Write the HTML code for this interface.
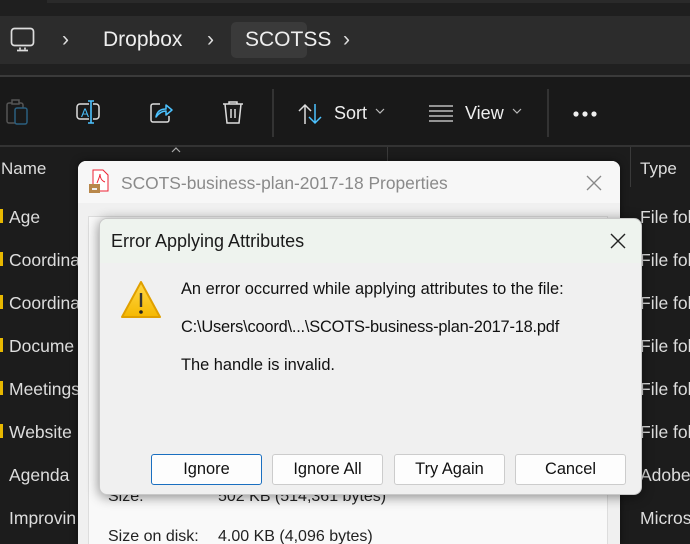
<!DOCTYPE html>
<html style="overflow:hidden"><head><meta charset="utf-8"><style>
*{margin:0;padding:0;box-sizing:border-box}
html,body{width:690px;height:544px;overflow:hidden}
body{background:#1c1c1c;font-family:"Liberation Sans",sans-serif;position:relative;color:#fff}
.a{position:absolute}
.t{white-space:nowrap}
</style></head><body>
<div class="a" style="left:0;top:0;width:690px;height:16px;background:#1f1f1f"></div>
<div class="a" style="left:47px;top:0;width:643px;height:3px;background:#2a2a2a"></div>
<div class="a" style="left:0;top:16px;width:690px;height:48px;background:#2c2c2c"></div>
<div class="a" style="left:0;top:64px;width:690px;height:11px;background:#202020"></div>
<div class="a" style="left:0;top:75px;width:690px;height:2px;background:#3a3a3a"></div>
<div class="a" style="left:0;top:77px;width:690px;height:68px;background:#191919"></div>
<div class="a" style="left:0;top:145px;width:690px;height:2px;background:#333"></div>
<!-- address bar -->
<svg class="a" style="left:10px;top:27px" width="28" height="26" viewBox="0 0 28 26"><rect x="1.5" y="1.5" width="22" height="17" rx="3" fill="none" stroke="#ddd" stroke-width="1.7"/><path d="M10 20.5v2M15 20.5v2M7 23.5h11" stroke="#ddd" stroke-width="1.7"/></svg>
<div class="a t" style="left:62px;top:28px;font-size:21px;color:#ddd">›</div>
<div class="a t" style="left:103px;top:28px;font-size:21px;color:#eee">Dropbox</div>
<div class="a t" style="left:207px;top:28px;font-size:21px;color:#ddd">›</div>
<div class="a" style="top:22px;width:76px;height:36px;background:#3a3a3a;border-radius:5px;left:231px"></div>
<div class="a t" style="left:245px;top:28px;font-size:21px;color:#eee">SCOTSS</div>
<div class="a t" style="left:343px;top:28px;font-size:21px;color:#ddd">›</div>
<!-- toolbar -->
<svg class="a" style="left:4px;top:98px" width="26" height="30"><rect x="3" y="5" width="16" height="20" rx="2" fill="none" stroke="#555" stroke-width="1.5"/><rect x="8" y="2" width="7" height="4" fill="#191919" stroke="#555" stroke-width="1.5"/><rect x="11" y="10" width="12" height="16" rx="2" fill="#191919" stroke="#2a5f7f" stroke-width="1.5"/></svg>
<svg class="a" style="left:75px;top:99px" width="28" height="28"><rect x="2" y="5" width="22" height="15" rx="3" fill="none" stroke="#ddd" stroke-width="1.5"/><rect x="14" y="3" width="4" height="20" fill="#191919"/><path d="M16 2v22M13 2h6M13 24h6" stroke="#4cc2ff" stroke-width="1.6"/><text x="6" y="18" font-size="12" fill="#4cc2ff" font-family="Liberation Sans">A</text></svg>
<svg class="a" style="left:148px;top:99px" width="28" height="28"><path d="M12 5H5a2 2 0 0 0-2 2v14a2 2 0 0 0 2 2h14a2 2 0 0 0 2-2v-4" fill="none" stroke="#ddd" stroke-width="1.5"/><path d="M8 18c1-6 5-8 10-8V6l6 5-6 5v-4c-4 0-7 2-10 6z" fill="none" stroke="#4cc2ff" stroke-width="1.5" stroke-linejoin="round"/></svg>
<svg class="a" style="left:220px;top:99px" width="26" height="28"><path d="M3 5h20M9 5V3h8v2M5 5l2 19h12l2-19M11 10v9M15 10v9" fill="none" stroke="#ddd" stroke-width="1.5"/></svg>
<div class="a" style="left:272px;top:89px;width:2px;height:48px;background:#333"></div>
<svg class="a" style="left:297px;top:102px" width="28" height="24"><path d="M8 22V3M2 9l6-6 6 6" fill="none" stroke="#ddd" stroke-width="1.5"/><path d="M18 2v19M12 15l6 6 6-6" fill="none" stroke="#4cc2ff" stroke-width="1.5"/></svg>
<div class="a t" style="left:334px;top:103px;font-size:18px;color:#eee">Sort</div>
<svg class="a" style="left:375px;top:108px" width="10" height="6"><path d="M1 1l4 4 4-4" fill="none" stroke="#bbb" stroke-width="1.2"/></svg>
<svg class="a" style="left:428px;top:104px" width="26" height="18"><path d="M1 2h24M1 7h24M1 12h24M1 17h24" stroke="#ddd" stroke-width="1.3"/></svg>
<div class="a t" style="left:465px;top:103px;font-size:18px;color:#eee">View</div>
<svg class="a" style="left:512px;top:108px" width="10" height="6"><path d="M1 1l4 4 4-4" fill="none" stroke="#bbb" stroke-width="1.2"/></svg>
<div class="a" style="left:547px;top:89px;width:2px;height:48px;background:#333"></div>
<svg class="a" style="left:572px;top:110px" width="26" height="8"><circle cx="4" cy="4" r="2.6" fill="#eee"/><circle cx="13" cy="4" r="2.6" fill="#eee"/><circle cx="22" cy="4" r="2.6" fill="#eee"/></svg>
<!-- header -->
<div class="a t" style="left:1px;top:159px;font-size:17px;color:#ddd">Name</div>
<svg class="a" style="left:171px;top:147px" width="10" height="6"><path d="M1 5l4-4 4 4" fill="none" stroke="#aaa" stroke-width="1.2"/></svg>
<div class="a" style="left:387px;top:147px;width:1px;height:40px;background:#3a3a3a"></div>
<div class="a" style="left:630px;top:147px;width:1px;height:40px;background:#3a3a3a"></div>
<div class="a t" style="left:640px;top:159px;font-size:17px;color:#ddd">Type</div>
<!-- rows -->
<div class="a t" style="left:0;top:196px;font-size:17.5px;line-height:43px;color:#ddd">
<div><span style="display:inline-block;width:3px;height:14px;background:#e8b800;margin-right:6px"></span>Age</div>
<div><span style="display:inline-block;width:3px;height:14px;background:#e8b800;margin-right:6px"></span>Coordina</div>
<div><span style="display:inline-block;width:3px;height:14px;background:#e8b800;margin-right:6px"></span>Coordina</div>
<div><span style="display:inline-block;width:3px;height:14px;background:#e8b800;margin-right:6px"></span>Docume</div>
<div><span style="display:inline-block;width:3px;height:14px;background:#e8b800;margin-right:6px"></span>Meetings</div>
<div><span style="display:inline-block;width:3px;height:14px;background:#e8b800;margin-right:6px"></span>Website</div>
<div style="padding-left:9px">Agenda</div>
<div style="padding-left:9px">Improvin</div>
</div>
<div class="a t" style="left:640px;top:196px;font-size:17.5px;line-height:43px;color:#ddd">File fol<br>File fol<br>File fol<br>File fol<br>File fol<br>File fol<br>Adobe<br>Micros</div>
<!-- properties window -->
<div class="a" style="left:78px;top:161px;width:542px;height:383px;background:#f0f0f0;border-radius:8px 8px 0 0;box-shadow:0 0 8px rgba(0,0,0,.5);overflow:hidden">
<div class="a" style="left:0;top:0;width:542px;height:42px;background:#f7f7f7"></div>
<svg class="a" style="left:10px;top:8px" width="22" height="26"><path d="M5 1h10l5 5v16H5z" fill="#fff" stroke="#e23" stroke-width="1"/><path d="M9 14c2-5 3-7 3-9 0 4 2 7 5 8" fill="none" stroke="#e23" stroke-width="1"/><rect x="1" y="15" width="11" height="9" fill="#b8874a"/><rect x="4" y="19" width="5" height="2" fill="#eee"/></svg>
<div class="a t" style="left:43px;top:12px;font-size:17.4px;color:#8a8a8a">SCOTS-business-plan-2017-18 Properties</div>
<svg class="a" style="left:508px;top:14px" width="16" height="16"><path d="M1 1l14 14M15 1L1 15" stroke="#888" stroke-width="1.3"/></svg>
<div class="a" style="left:10px;top:55px;width:520px;height:350px;background:#f9f9f9;border:1px solid #ddd"></div>
<div class="a t" style="left:30px;top:327px;font-size:16px;color:#222">Size:</div>
<div class="a t" style="left:140px;top:327px;font-size:16px;color:#222">502 KB (514,361 bytes)</div>
<div class="a t" style="left:30px;top:367px;font-size:16px;color:#222">Size on disk:</div>
<div class="a t" style="left:140px;top:367px;font-size:16px;color:#222">4.00 KB (4,096 bytes)</div>
</div>
<!-- error dialog -->
<div class="a" style="left:99px;top:218px;width:543px;height:277px;background:#f0f0f0;border-radius:8px;box-shadow:0 2px 12px rgba(0,0,0,.45);border:1px solid #c8c8c8;overflow:hidden">
<div class="a" style="left:0;top:0;width:543px;height:44px;background:#eef3ee"></div>
<div class="a t" style="left:11px;top:12px;font-size:18px;color:#1a1a1a">Error Applying Attributes</div>
<svg class="a" style="left:510px;top:14px" width="16" height="16"><path d="M1 1l14 14M15 1L1 15" stroke="#222" stroke-width="1.4"/></svg>
<svg class="a" style="left:19px;top:60px" width="44" height="42"><defs><linearGradient id="g" x1="0" y1="0" x2="0" y2="1"><stop offset="0" stop-color="#ffd84a"/><stop offset="1" stop-color="#f5b800"/></linearGradient></defs><path d="M22 3 L41 38 H3 Z" fill="url(#g)" stroke="#e0a000" stroke-width="2" stroke-linejoin="round"/><path d="M22 14v14" stroke="#333" stroke-width="2.4"/><circle cx="22" cy="33" r="1.8" fill="#222"/></svg>
<div class="a t" style="left:81px;top:61px;font-size:16.4px;color:#111">An error occurred while applying attributes to the file:</div>
<div class="a t" style="left:81px;top:99px;font-size:16.4px;color:#111;letter-spacing:-0.2px">C:\Users\coord\...\SCOTS-business-plan-2017-18.pdf</div>
<div class="a t" style="left:81px;top:137px;font-size:16.4px;color:#111">The handle is invalid.</div>
<div class="a" style="left:51px;top:235px;width:111px;height:31px;background:#fdfdfd;border:1px solid #1a6fc0;border-radius:3px;text-align:center;font-size:16.4px;line-height:29px;color:#111">Ignore</div>
<div class="a" style="left:172px;top:235px;width:111px;height:31px;background:#fdfdfd;border:1px solid #ccc;border-radius:3px;text-align:center;font-size:16.4px;line-height:29px;color:#111">Ignore All</div>
<div class="a" style="left:294px;top:235px;width:111px;height:31px;background:#fdfdfd;border:1px solid #ccc;border-radius:3px;text-align:center;font-size:16.4px;line-height:29px;color:#111">Try Again</div>
<div class="a" style="left:415px;top:235px;width:111px;height:31px;background:#fdfdfd;border:1px solid #ccc;border-radius:3px;text-align:center;font-size:16.4px;line-height:29px;color:#111">Cancel</div>
</div>
</body></html>
